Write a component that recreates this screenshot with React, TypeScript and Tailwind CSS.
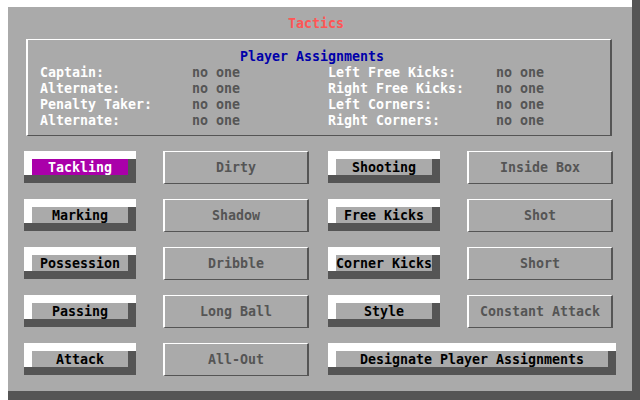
import React from "react"

type Btn = { label: string; kind: "on" | "off" | "sel"; span?: boolean }

const assignments = [
  ["Captain:", "no one", "Left Free Kicks:", "no one"],
  ["Alternate:", "no one", "Right Free Kicks:", "no one"],
  ["Penalty Taker:", "no one", "Left Corners:", "no one"],
  ["Alternate:", "no one", "Right Corners:", "no one"],
]

const buttons: Btn[] = [
  { label: "Tackling", kind: "sel" },
  { label: "Dirty", kind: "off" },
  { label: "Shooting", kind: "on" },
  { label: "Inside Box", kind: "off" },
  { label: "Marking", kind: "on" },
  { label: "Shadow", kind: "off" },
  { label: "Free Kicks", kind: "on" },
  { label: "Shot", kind: "off" },
  { label: "Possession", kind: "on" },
  { label: "Dribble", kind: "off" },
  { label: "Corner Kicks", kind: "on" },
  { label: "Short", kind: "off" },
  { label: "Passing", kind: "on" },
  { label: "Long Ball", kind: "off" },
  { label: "Style", kind: "on" },
  { label: "Constant Attack", kind: "off" },
  { label: "Attack", kind: "on" },
  { label: "All-Out", kind: "off" },
  { label: "Designate Player Assignments", kind: "on", span: true },
]

function RaisedButton({ label, selected, wide }: { label: string; selected?: boolean; wide?: boolean }) {
  return (
    <div className={wide ? "w-[288px] col-span-2 flex flex-col" : "w-[112px] flex flex-col"}>
      <div className="h-2 bg-white" />
      <div className="flex h-4">
        <div className="w-2 bg-white" />
        <div
          className={
            selected
              ? "flex-1 bg-[#aa00aa] text-white text-center leading-[18px]"
              : "flex-1 bg-[#aaaaaa] text-black text-center whitespace-nowrap leading-[18px]"
          }
        >
          {label}
        </div>
        <div className="w-2 bg-[#555555]" />
      </div>
      <div className="h-2 bg-[#555555]" />
    </div>
  )
}

function FlatButton({ label }: { label: string }) {
  return (
    <div className="w-[146px] h-[33px] border-l-2 border-t border-r-2 border-b border-l-white border-t-white border-r-[#555555] border-b-[#555555] flex items-center justify-center text-[#555555]">
      {label}
    </div>
  )
}

export default function App() {
  return (
    <div className="w-[640px] h-[400px] bg-white flex flex-col overflow-hidden font-['DejaVu_Sans_Mono','Liberation_Mono',monospace] text-[13.3px] font-bold leading-4">
      <div className="flex h-[391px]">
        <div className="w-2" />
        <div className="w-[624px] flex flex-col">
          <div className="h-[7px]" />
          <div className="flex-1 bg-[#aaaaaa] flex flex-col pt-[9px] pl-4">
            <div className="h-4 pl-[264px] text-[#ff5555]">Tactics</div>

            {/* player assignments */}
            <div className="mt-[7px] ml-[2px] w-[586px] border-l-2 border-t border-r-2 border-b border-l-white border-t-white border-r-[#555555] border-b-[#555555] pt-[9px] pb-[6px] pl-3">
              <div className="pl-[200px] text-[#0000aa]">Player Assignments</div>
              <div className="grid grid-cols-[152px_136px_168px_1fr]">
                {assignments.map((row, i) => (
                  <React.Fragment key={i}>
                    <div className="text-white whitespace-nowrap">{row[0]}</div>
                    <div className="text-[#555555]">{row[1]}</div>
                    <div className="text-white whitespace-nowrap">{row[2]}</div>
                    <div className="text-[#555555]">{row[3]}</div>
                  </React.Fragment>
                ))}
              </div>
            </div>

            <div className="mt-[15px] grid grid-cols-[139px_165px_139px_146px] grid-rows-[repeat(5,32px)] gap-y-4 justify-items-start">
              {buttons.map((b) =>
                b.kind === "off" ? (
                  <FlatButton key={b.label} label={b.label} />
                ) : (
                  <RaisedButton key={b.label} label={b.label} selected={b.kind === "sel"} wide={b.span} />
                )
              )}
            </div>
          </div>
        </div>
        <div className="w-2 bg-[#555555]" />
      </div>
      <div className="flex h-[9px]">
        <div className="w-2" />
        <div className="flex-1 bg-[#555555]" />
      </div>
    </div>
  )
}
